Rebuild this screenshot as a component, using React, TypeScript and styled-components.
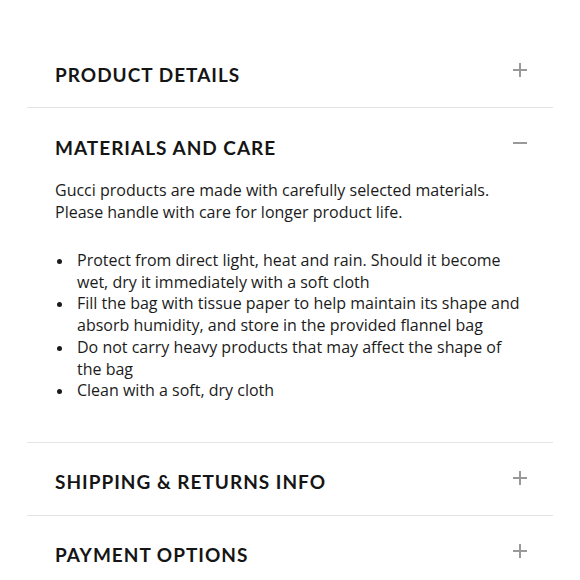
import React from "react";
import styled, { createGlobalStyle } from "styled-components";

const GlobalStyle = createGlobalStyle`
  * { box-sizing: border-box; }
  body {
    margin: 0;
    background: #fff;
    font-family: "Open Sans", "Noto Sans", sans-serif;
    color: #1b1b1b;
  }
`;

const Page = styled.div`
  padding: 35px 27px 0;
`;

const Section = styled.section<{ $last?: boolean }>`
  border-bottom: ${(p) => (p.$last ? "none" : "1px solid #e4e4e4")};
`;

const Header = styled.div`
  height: 72px;
  display: flex;
  align-items: center;
  justify-content: space-between;
  padding: 6px 26px 0 28px;
`;

const Title = styled.h2`
  margin: 0;
  font-family: "Lato", sans-serif;
  font-size: 19px;
  font-weight: 700;
  letter-spacing: 1px;
  color: #151515;
`;

const Toggle = styled.svg`
  width: 14px;
  height: 14px;
  margin-top: -8px;
  color: #999;
`;

const Body = styled.div`
  padding: 0 28px 40px;
  font-size: 16px;
  line-height: 22px;
`;

const Intro = styled.p`
  margin: -1px 0 27px;
`;

const List = styled.ul`
  margin: 0;
  padding: 0;
  list-style: none;
  line-height: 21.7px;
`;

const Item = styled.li`
  display: grid;
  grid-template-columns: 22px 1fr;
  &::before {
    content: "";
    width: 5px;
    height: 5px;
    margin: 9px 0 0 2px;
    border-radius: 50%;
    background: #1b1b1b;
  }
`;

const Icon = ({ open }: { open: boolean }) => (
  <Toggle viewBox="0 0 14 14">
    <path d="M0 7h14" stroke="currentColor" strokeWidth="2" />
    {!open && <path d="M7 0v14" stroke="currentColor" strokeWidth="2" />}
  </Toggle>
);

const care = [
  "Protect from direct light, heat and rain. Should it become wet, dry it immediately with a soft cloth",
  "Fill the bag with tissue paper to help maintain its shape and absorb humidity, and store in the provided flannel bag",
  "Do not carry heavy products that may affect the shape of the bag",
  "Clean with a soft, dry cloth",
];

const App: React.FC = () => {
  return (
    <>
      <GlobalStyle />
      <Page>
        <Section>
          <Header>
            <Title>PRODUCT DETAILS</Title>
            <Icon open={false} />
          </Header>
        </Section>
        <Section>
          <Header>
            <Title>MATERIALS AND CARE</Title>
            <Icon open />
          </Header>
          <Body>
            <Intro>
              Gucci products are made with carefully selected materials.
              <br />
              Please handle with care for longer product life.
            </Intro>
            <List>
              {care.map((c) => (
                <Item key={c}>
                  <span>{c}</span>
                </Item>
              ))}
            </List>
          </Body>
        </Section>
        <Section>
          <Header>
            <Title>SHIPPING &amp; RETURNS INFO</Title>
            <Icon open={false} />
          </Header>
        </Section>
        <Section $last>
          <Header>
            <Title>PAYMENT OPTIONS</Title>
            <Icon open={false} />
          </Header>
        </Section>
      </Page>
    </>
  );
};

export default App;
